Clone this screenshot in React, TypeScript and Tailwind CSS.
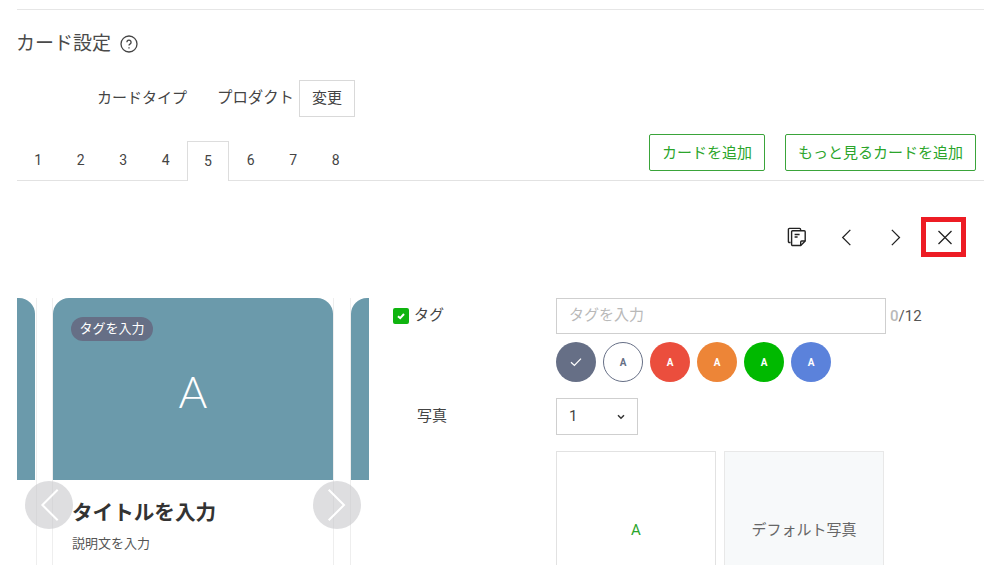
import React from 'react';

const tabs = ['1', '2', '3', '4', '5', '6', '7', '8'];

const swatches = [
    { bg: 'bg-white border border-[#666f86] text-[#666f86]', key: 'white' },
    { bg: 'bg-[#eb4e3d] text-white', key: 'red' },
    { bg: 'bg-[#ed8537] text-white', key: 'orange' },
    { bg: 'bg-[#00b900] text-white', key: 'green' },
    { bg: 'bg-[#5b82db] text-white', key: 'blue' },
];

function CopyIcon() {
    return (
        <svg width="20" height="20" viewBox="0 0 20 20" fill="none" stroke="#222" strokeWidth="1.4" strokeLinejoin="round">
            <path d="M3.6 15.5H2.4a1 1 0 0 1-1-1V2.4a1 1 0 0 1 1-1h10.2a1 1 0 0 1 1 1V3.6" />
            <path d="M5.6 18.5a1 1 0 0 1-1-1V4.8a1 1 0 0 1 1-1h11.6a1 1 0 0 1 1 1V14l-4.5 4.5z" fill="#fff" />
            <path d="M18.2 14h-3.5a1 1 0 0 0-1 1v3.5" />
            <path d="M7.6 7.5h5M7.6 10h3" strokeWidth="1.3" />
        </svg>
    );
}

function Chevron({ dir, size, color, width }: { dir: 'left' | 'right'; size: number; color: string; width: number }) {
    return (
        <svg width={size * 0.6} height={size} viewBox="0 0 12 20" fill="none" stroke={color} strokeWidth={width}>
            <path d={dir === 'left' ? 'M11 1 2 10l9 9' : 'M1 1l9 9-9 9'} />
        </svg>
    );
}

function CardPreview() {
    return (
        <div className="relative w-[352px] h-[300px] overflow-hidden flex">
            <div className="w-[20px] shrink-0 border-r border-[#eeeeee] pr-px">
                <div className="h-[182px] bg-[#6b9aab] rounded-tr-[16px]" />
            </div>
            <div className="w-[282px] shrink-0 ml-[15px] border-x border-[#eeeeee]">
                <div className="relative h-[182px] bg-[#6b9aab] rounded-t-[16px] flex items-center justify-center">
                    <span className="absolute left-[18px] top-[19px] h-[24px] w-[82px] rounded-full bg-[#666f86] text-white text-[13px] leading-[23px] text-center">タグを入力</span>
                    <span className="text-white text-[44px] font-light font-['Lato',sans-serif] mt-[4px]">A</span>
                </div>
                <div className="pl-[19px] pt-[18px]">
                    <p className="text-[20.6px] leading-[30px] font-bold text-[#333333]">タイトルを入力</p>
                    <p className="mt-[6px] text-[13px] leading-[20px] text-[#555555]">説明文を入力</p>
                </div>
            </div>
            <div className="w-[40px] shrink-0 ml-[16px] border-l border-[#eeeeee]">
                <div className="h-[182px] bg-[#6b9aab] rounded-tl-[16px]" />
            </div>
            <button className="absolute left-[8px] top-[183px] w-[48px] h-[48px] rounded-full bg-[#c8c8cc]/60 flex items-center justify-center">
                <Chevron dir="left" size={34} color="#ffffff" width={1.2} />
            </button>
            <button className="absolute left-[296px] top-[183px] w-[48px] h-[48px] rounded-full bg-[#c8c8cc]/60 flex items-center justify-center">
                <Chevron dir="right" size={34} color="#ffffff" width={1.2} />
            </button>
        </div>
    );
}

function CardForm() {
    return (
        <div className="ml-[24px] grid grid-cols-[163px_1fr] content-start text-[15px] text-[#444444]">
            <div className="flex items-center h-[36px] gap-[5px]">
                <span className="w-[16px] h-[16px] rounded-[2px] bg-[#0fb40f] flex items-center justify-center">
                    <svg width="10" height="10" viewBox="0 0 10 10" fill="none" stroke="#fff" strokeWidth="2">
                        <path d="M2 5.2 4.2 7.2 8 3" />
                    </svg>
                </span>
                <span className="-mt-[1px]">タグ</span>
            </div>
            <div className="flex items-center">
                <div className="w-[330px] h-[36px] border border-[#cfcfcf] pl-[12px] leading-[33px] text-[#b9b9b9]">タグを入力</div>
                <span className="ml-[4px] text-[15px] text-[#555555]"><span className="text-[#b9b9b9] font-medium">0</span>/12</span>
            </div>

            <div />
            <div className="flex gap-[7px] mt-[8px]">
                <span className="w-[40px] h-[40px] rounded-full bg-[#666f86] flex items-center justify-center">
                    <svg width="12" height="10" viewBox="0 0 12 10" fill="none" stroke="#fff" strokeWidth="1.3">
                        <path d="M1 5.2 4.4 8.4 11 1.6" />
                    </svg>
                </span>
                {swatches.map((s) => (
                    <span key={s.key} className={`w-[40px] h-[40px] rounded-full flex items-center justify-center text-[10px] font-bold ${s.bg}`}>A</span>
                ))}
            </div>

            <div className="mt-[16px] h-[37px] pl-[24px] flex items-center">写真</div>
            <div className="mt-[16px]">
                <div className="w-[82px] h-[37px] border border-[#cfcfcf] pl-[12px] pr-[12px] flex items-center justify-between text-[#444444]">
                    <span>1</span>
                    <svg width="8" height="6" viewBox="0 0 8 6" fill="none" stroke="#333" strokeWidth="1.5">
                        <path d="M1 1.2 4 4.2 7 1.2" />
                    </svg>
                </div>
            </div>

            <div />
            <div className="flex gap-[8px] mt-[16px]">
                <div className="w-[160px] h-[158px] border border-[#e2e2e2] flex items-center justify-center text-[#2ba52b] text-[15px]">A</div>
                <div className="w-[160px] h-[158px] border border-[#e8e8e8] bg-[#f7f9fa] flex items-center justify-center text-[#666666]">デフォルト写真</div>
            </div>
        </div>
    );
}

export default function App() {
    return (
        <div className="w-[998px] h-[565px] overflow-hidden bg-white pl-[17px] pr-[14px] text-[#444444] font-['Roboto','Noto_Sans_CJK_JP',sans-serif]">
            <div className="pt-[9px]">
                <div className="border-t border-[#e6e6e6]" />
            </div>

            <div className="mt-[17px] h-[34px] flex items-center">
                <h2 className="text-[19px] font-normal text-[#4a4a4a] mt-[1px] -ml-px">カード設定</h2>
                <svg className="ml-[9px]" width="18" height="18" viewBox="0 0 18 18" fill="none" stroke="#444" strokeWidth="1.3">
                    <circle cx="9" cy="9" r="8" />
                    <path d="M6.9 7.2a2.1 2.1 0 1 1 3.3 1.7c-.8.5-1.2.9-1.2 1.7" />
                    <path d="M9 12.2v1.3" />
                </svg>
            </div>

            <div className="mt-[19px] h-[37px] flex items-center pl-[80px] text-[15px]">
                <span>カードタイプ</span>
                <span className="ml-[30px] w-[75px] text-[15.4px] whitespace-nowrap">プロダクト</span>
                <button className="ml-[7px] w-[56px] h-[37px] border border-[#d9d9d9] text-[15px] text-[#444444]">変更</button>
            </div>

            <div className="mt-[17px] h-[47px] border-b border-[#e2e2e2] flex justify-between">
                <div className="flex items-end">
                    {tabs.map((t) => (
                        <div
                            key={t}
                            className={
                                t === '5'
                                    ? 'w-[42px] mr-[0.5px] h-[40px] -mb-px border border-b-0 border-[#dddddd] bg-white flex items-center justify-center text-[14px]'
                                    : 'w-[42.5px] h-[39px] flex items-center justify-center text-[14px]'
                            }
                        >
                            {t}
                        </div>
                    ))}
                </div>
                <div className="flex gap-[20px] pr-[8px] text-[15px] text-[#2ba52b]">
                    <button className="w-[116px] h-[37px] pt-px border border-[#3aa43a] rounded-[2px]">カードを追加</button>
                    <button className="w-[191px] h-[37px] pt-px border border-[#3aa43a] rounded-[2px]">もっと見るカードを追加</button>
                </div>
            </div>

            <div className="mt-[36px] h-[40px] flex justify-end items-center pr-[18px]">
                <div className="-translate-x-[1px]"><CopyIcon /></div>
                <div className="ml-[33px]"><Chevron dir="left" size={17} color="#222222" width={1.5} /></div>
                <div className="ml-[40px]"><Chevron dir="right" size={17} color="#222222" width={1.5} /></div>
                <div className="ml-[20px] w-[45px] h-[40px] border-[5px] border-[#ed1c24] flex items-center justify-center">
                    <svg className="translate-x-[1.5px]" width="15" height="15" viewBox="0 0 15 15" fill="none" stroke="#222" strokeWidth="1.3">
                        <path d="M1 1l13 13M14 1 1 14" />
                    </svg>
                </div>
            </div>

            <div className="mt-[41px] flex">
                <CardPreview />
                <CardForm />
            </div>
        </div>
    );
}
